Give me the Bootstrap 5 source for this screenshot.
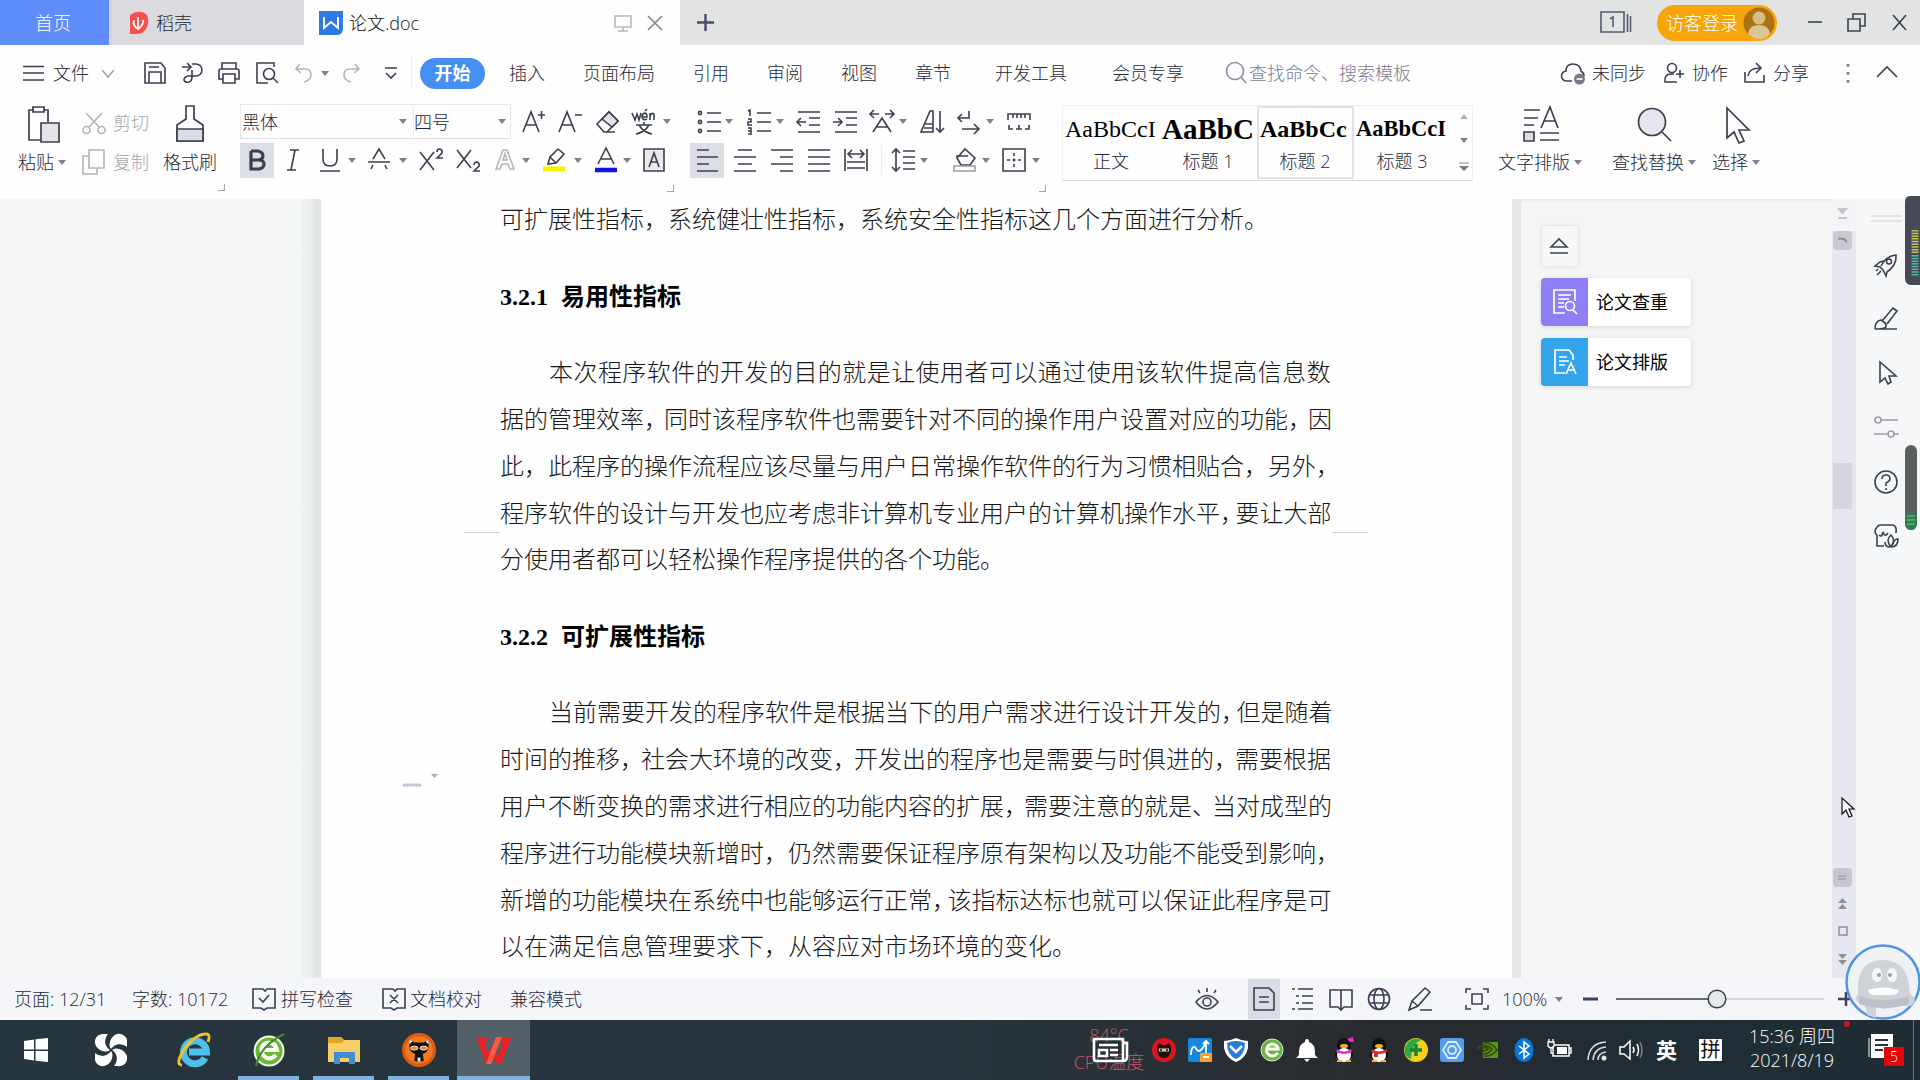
<!DOCTYPE html>
<html lang="zh-CN">
<head>
<meta charset="utf-8">
<title>论文.doc</title>
<link rel="stylesheet" href="https://cdn.jsdelivr.net/npm/bootstrap@5.3.0/dist/css/bootstrap.min.css">
<style>
body{width:1920px;height:1080px;overflow:hidden;font-family:"Open Sans","Noto Sans CJK SC",sans-serif;font-size:18px;line-height:24px;color:#25283a;background:#fefefe}
svg{display:block;overflow:visible;flex:none}
.ic{width:24px;height:24px;fill:none;stroke:#3b4050;stroke-width:1.6}
.big{width:40px;height:40px;fill:none;stroke:#3b4050;stroke-width:1.7}
.dim{stroke:#b3b5ba;color:#a9abb0}
.ca{width:0;height:0;border:4.5px solid transparent;border-top:5px solid #7d808a;border-bottom:0;display:block}
.track{display:grid;align-items:center;white-space:nowrap;justify-items:start}
body,.track{font-weight:300}
/* tab strip */
.tabs-bar{height:45px;background:#e2e4e4}
.home-tab{width:109px;background:#5f8dfb;color:#fff;padding-left:35px}
.dk-tab{width:195px;background:#dbdbdf;padding-left:18px;border-left:3px solid #d3d4db}
.doc-tab{width:376px;background:#fefefe;padding-left:15px;padding-right:13px}
.login{width:120px;border-radius:20px;background:#f7a50b;color:#fff;height:36px;padding:0 2px 0 9px}
/* menu */
.menu-bar{height:56px;padding-left:21px;grid-template-columns:32px 43px 47px 37px 37px 37px 38px 25px 22px 39px 33px 9px 89px 74px 110px 74px 74px 74px 80px 117px 112px 25px 312px 31px 70px 30px 50px 31px 63px 39px 40px}
.pill{width:65px;height:31px;border-radius:16px;background:#468ff2;color:#fff;font-weight:700;text-align:center;line-height:30px}
.vr-s{width:1px;height:30px;background:#ececf0}
/* ribbon */
.ribbon{height:98px}
.g-clip{width:240px;padding:3px 0 0 16px}
.g-font{width:450px;padding-top:3px}
.g-para{width:372px;padding-top:3px}
.lbl{margin-top:6px}
.f1{height:35px;grid-template-columns:270px 1fr}
.combo{width:271px;height:35px;border:1px solid #e9e9ec;border-bottom-color:#dfdfe3;grid-template-columns:158px 14px 1px 84px 12px}
.f1b{grid-template-columns:36px 37px 37px 31px 9px;padding-left:12px}
.f2{height:42px;grid-template-columns:41px 37px 30px 19px 32px 20px 37px 37px 29px 20px 32px 20px 29px 19px 34px}
.p1{height:35px;padding-left:7px;grid-template-columns:28px 22px 29px 20px 37px 37px 29px 21px 37px 29px 21px 34px}
.p2{height:42px;grid-template-columns:43px 37px 37px 37px 37px 10px 29px 33px 29px 20px 30px 10px}
.pressed{background:#dcdde5;width:34px;height:35px;display:grid;place-items:center}
.corner-mk{width:7px;height:7px;border:solid #a4a6ad;border-width:0 1.5px 1.5px 0}
.gallery{width:411px;height:76px;margin-top:4px;border:1px solid #f0f0f3;border-bottom:1px solid #d8d8dc}
.sty{width:97px;height:73px;padding:8px 3px 0 2px;overflow:hidden;text-align:center}
.sty b,.sty i{display:block;font-family:"Liberation Serif",serif;font-style:normal;color:#000;font-size:24px;line-height:30px;height:35px;white-space:nowrap;text-align:left}
.sty b{font-weight:700}
.sty.sel{border:2px solid #e2e2e6;padding:6px 2px 0 1px}
.sty span{display:block;line-height:24px}
.rb{padding-top:3px}
/* document area */
.work{height:779px;background:#f5f7f7;box-shadow:inset 0 4px 3px -2px #e8eaea}
.lgut{width:321px;background:linear-gradient(90deg,#f6f8f8 300px,#f1f4f4 301px,#e9ecec 312px,#e4e6e6 314px)}
.paper{width:1191px;background:#fefefe;padding:0 180px 0 179px;font-family:"Liberation Serif","Noto Sans CJK SC",serif;font-size:24px;color:#181818;font-weight:300;position:relative}
.ln{height:47px;line-height:47px;white-space:nowrap}
.ln.ind{padding-left:49px}
.ln.loose{letter-spacing:.44px}
.ln u{text-decoration:none;letter-spacing:-4px}
.ln.one u{letter-spacing:-8.5px}
.ln.three u{letter-spacing:-3px}
.hd{height:47px;line-height:47px;font-weight:700;font-size:24px;color:#000;word-spacing:7px}
.crop-mk{position:absolute;top:333px;width:36px;height:1px;background:#cfd1d1}
.rpane{width:320px;border-left:9px solid #e6e8e8;padding:27px 0 0 20px}
.up-btn{width:36px;height:40px;background:#f8f8f8;box-shadow:0 0 4px #d4d6d6;display:grid;place-items:center;margin-left:1px}
.tool-card{width:150px;height:48px;background:#fff;border-radius:4px;box-shadow:0 1px 5px #d2d4d6;overflow:hidden;color:#000;font-weight:400}
.tool-card>div{width:47px;height:48px;display:grid;place-items:center;margin-right:8px}
.sbar{width:24px;background:#e7e7f1}
.side{width:64px;background:#f5f7f8;padding-left:18px}
.ov{position:absolute}
/* status bar */
.status{height:42px;background:#f5f6f9;padding-left:14px;grid-template-columns:118px 120px 29px 101px 28px 100px 685px 53px 43px 38px 38px 41px 57px 37px 53px 28px 33px 222px 20px}
/* taskbar */
.taskbar{height:60px;background:linear-gradient(90deg,#26363e 0,#27343b 50%,#292b2f 72%,#1f2d34 88%,#1e2c33);color:#fff}
.app{height:60px;display:grid;place-items:center;border-bottom:0 solid #7fb2e4}
.app.on{border-bottom-width:4px;padding-top:4px}
.tray-row{grid-template-columns:36px 36px 36px 35px 37px 35px 37px 36px 37px 35px 36px 37px 34px 35px 45px 43px}
.tray-row svg{width:24px;height:24px}
.temp{color:#cf5568;font-size:18px;line-height:18px;left:1072px;top:1026px;width:74px;position:absolute}
</style>
<script src="https://cdn.jsdelivr.net/npm/bootstrap@5.3.0/dist/js/bootstrap.bundle.min.js"></script>
</head>
<body class="position-relative">
<!-- Tab strip -->
<header class="tabs-bar d-flex">
  <div class="home-tab d-flex align-items-center">首页</div>
  <div class="dk-tab d-flex align-items-center gap-2">
    <svg width="18" height="22" viewBox="0 0 18 22"><path d="M0 3Q9-3 16 2Q19 6 18 12Q16 22 6 22H0Z" fill="#f5504d"/><path d="M8 18V5M8 17Q2 13 4 8M8 17Q14 13 13 8" stroke="#fff" stroke-width="1.8" fill="none"/></svg>稻壳</div>
  <div class="doc-tab d-flex align-items-center">
    <svg width="24" height="24" viewBox="0 0 24 24"><path d="M0 0H24V17Q24 24 18 24H0Z" fill="#2f7be6"/><path d="M5 6V17L12 11L19 17V6" stroke="#fff" stroke-width="1.9" fill="none"/></svg>
    <span style="color:#111;padding-left:6px">论文.doc</span>
    <svg class="ic ms-auto" style="stroke:#b6b8c2" viewBox="0 0 24 24"><path d="M4 5H20V16H4ZM12 16V20M7 20H17"/></svg>
    <svg class="ic ms-2" style="stroke:#83858f" viewBox="0 0 24 24"><path d="M5 5L19 19M19 5L5 19"/></svg>
  </div>
  <svg class="ms-3 mt-2" width="20" height="28" viewBox="0 0 20 28"><path d="M9.500 6V23M1 14.500H18" stroke="#474a68" stroke-width="2.400"/></svg>
  <div class="d-flex align-items-center ms-auto pe-2">
    <svg width="32" height="24" viewBox="0 0 32 24" fill="none" stroke="#555970" stroke-width="1.6"><path d="M0 1H23V21H0ZM26.500 3V21M29.500 5V21"/><path d="M9 8L12 6V16" /></svg>
    <div class="login d-flex align-items-center justify-content-between ms-4"><span>访客登录</span>
      <svg width="32" height="32" viewBox="0 0 32 32"><circle cx="16" cy="16" r="15.500" fill="#a97316"/><circle cx="16" cy="11" r="6.500" fill="#d9bd82"/><path d="M5 27Q6 18 16 18Q26 18 27 27Q22 32 16 32Q10 32 5 27Z" fill="#dcc696"/></svg></div>
    <svg class="ic" style="margin-left:27px" viewBox="0 0 24 24"><path d="M4 11H18"/></svg>
    <svg class="ic" style="margin-left:18px" viewBox="0 0 24 24"><path d="M2 8H14V20H2ZM7 8V3H19V15H14"/></svg>
    <svg class="ic" style="margin-left:18px" viewBox="0 0 24 24"><path d="M5 4L18 19M18 4L5 19"/></svg>
  </div>
</header>

<!-- Menu bar -->
<nav class="menu-bar track">
  <svg class="ic" viewBox="0 0 24 24"><path d="M2 5.500H23M2 12H23M2 19H23"/></svg>
  <span>文件</span>
  <svg class="ic" style="stroke:#9da0aa" viewBox="0 0 24 24"><path d="M6 9L12 16L18 9"/></svg>
  <svg class="ic" viewBox="0 0 24 24"><path d="M2 2H18L22 7V22H2ZM6 22V11H18V22M6 6H16"/></svg>
  <svg class="ic" viewBox="0 0 24 24"><path d="M2 6H10M7 2L11 6L7 10M12 3H16A6 6 0 0 1 16 15H8Q4 16 4 19Q5 22 9 21Q12 20 12 16V9"/></svg>
  <svg class="ic" viewBox="0 0 24 24"><path d="M5 8V2H19V8M6 18H2V10Q2 8 4 8H20Q22 8 22 10V18H18M6 13H18V22H6Z"/></svg>
  <svg class="ic" viewBox="0 0 24 24"><path d="M20 6V2H3V22H14"/><circle cx="15" cy="13" r="5.500"/><path d="M19 17L24 22"/></svg>
  <svg class="ic dim" viewBox="0 0 24 24"><path d="M8 3L4 8L9 12M4 8H13Q19 8 19 14Q19 19 12 21"/></svg>
  <i class="ca ms-1"></i>
  <svg class="ic dim" viewBox="0 0 24 24"><path d="M16 3L20 8L15 12M20 8H11Q5 8 5 14Q5 19 12 21"/></svg>
  <svg class="ic" viewBox="0 0 24 24"><path d="M7 7H19M8 12L13 17L18 12"/></svg>
  <span class="vr-s"></span>
  <span class="pill">开始</span>
  <span>插入</span><span>页面布局</span><span>引用</span><span>审阅</span><span>视图</span><span>章节</span><span>开发工具</span><span>会员专享</span>
  <svg class="ic" style="stroke:#8b8fa3" viewBox="0 0 24 24"><circle cx="11" cy="10" r="8.500"/><path d="M17 16L22 22"/></svg>
  <span style="color:#787c94">查找命令、搜索模板</span>
  <svg class="ic" viewBox="0 0 24 24"><path d="M11 20H6A5 5 0 0 1 5 10Q5 3 12 3Q19 3 20 10Q23 12 23 15"/><circle cx="18.500" cy="18" r="5.500" fill="#777b87" stroke="none"/><path d="M15.500 18H21.500" stroke="#fff"/></svg>
  <span>未同步</span>
  <svg class="ic" viewBox="0 0 24 24"><circle cx="10" cy="7" r="4.500"/><path d="M15 21H3Q2 13 9 13H12M18 9V17M14 13H22"/></svg>
  <span>协作</span>
  <svg class="ic" viewBox="0 0 24 24"><path d="M3 11V21H22V14M6 15Q7 7 18 7M14 2L19 7L14 12"/></svg>
  <span>分享</span>
  <svg class="ic" viewBox="0 0 24 24"><path d="M12 3V5.500M12 11V13.500M12 19V21.500" stroke-width="2.500" stroke="#70737e"/></svg>
  <svg class="ic" viewBox="0 0 24 24"><path d="M2 16L12 6L22 16"/></svg>
</nav>

<!-- Ribbon -->
<section class="ribbon d-flex">
  <div class="g-clip d-flex">
    <div style="width:66px">
      <svg class="big" style="margin-left:7px" viewBox="0 0 40 40"><path d="M10 6H6V36H18M25 18V6H21M10 3H21V8H10Z"/><path d="M18 19H36V38H18Z" fill="#e3e4ea"/></svg>
      <div class="d-flex align-items-center gap-1 lbl" style="margin-left:2px">粘贴<i class="ca"></i></div>
    </div>
    <div style="width:72px;color:#a6a8ad">
      <div class="d-flex align-items-center" style="height:38px;gap:7px"><svg class="ic dim" viewBox="0 0 24 24"><path d="M4 2L17 16M20 2L7 16"/><circle cx="4.500" cy="19" r="3.500"/><circle cx="19.500" cy="19" r="3.500"/></svg>剪切</div>
      <div class="d-flex align-items-center" style="height:40px;gap:7px"><svg class="ic dim" viewBox="0 0 24 24"><path d="M7 0H22V18H7ZM7 6H1V24H15V18"/></svg>复制</div>
    </div>
    <div class="text-center" style="width:64px;padding-left:8px">
      <svg class="big mx-auto" viewBox="0 0 40 40"><path d="M16 2H24V15L33 21V37H7V21L16 15Z"/><path d="M7 25H33V37H7Z" fill="#dcdde4"/></svg>
      <div class="lbl text-nowrap">格式刷</div>
    </div>
    <i class="corner-mk align-self-end mb-2"></i>
  </div>
  <div class="g-font">
    <div class="f1 track">
      <div class="combo track"><span style="padding-left:1px">黑体</span><i class="ca"></i><span class="vr-s"></span><span>四号</span><i class="ca"></i></div>
      <div class="f1b track">
        <svg class="ic" viewBox="0 0 24 24"><path d="M1 22L9 2L17 22M4 15H14M16 5H23M19.500 1V9"/></svg>
        <svg class="ic" viewBox="0 0 24 24"><path d="M1 22L9 2L17 22M4 15H14M17 5H24"/></svg>
        <svg class="ic" viewBox="0 0 24 24"><path d="M2 14L14 2L23 11L12 22H9ZM12 22H20"/><path d="M7 9L14 2L23 11L17 17Z" fill="#e3e4ea"/></svg>
        <svg class="ic" viewBox="0 0 24 24"><path d="M0 3L3 10L5 4L7 10L9 3M10 7H15Q15 3 12.500 3Q10 4 10 7Q11 11 15 9M13 1L15-1M18 10V3M18 6Q20 2 22 4V10M4 15H20M12 12V15M7 15Q11 22 20 24M17 15Q13 22 4 24"/></svg>
        <i class="ca"></i>
      </div>
    </div>
    <div class="f2 track">
      <span class="pressed"><svg class="ic" viewBox="0 0 24 24" style="stroke-width:3.200"><path d="M6 3H13Q18 4 18 8Q18 12 12 12H6V3V21H14Q19 20 19 16Q19 12 13 12"/></svg></span>
      <svg class="ic" viewBox="0 0 24 24"><path d="M9 2H18M6 22H15M14 2L10 22"/></svg>
      <svg class="ic" viewBox="0 0 24 24"><path d="M5 1V11Q5 18 12 18Q19 18 19 11V1M2 23H22"/></svg><i class="ca"></i>
      <svg class="ic" viewBox="0 0 24 24"><path d="M6 11L12 1L18 11M1 14H23M4 21L6 17M20 21L18 17"/></svg><i class="ca"></i>
      <svg class="ic" viewBox="0 0 24 24"><path d="M1 4L15 22M15 4L1 22M18 4Q18 1 21 1Q24 2 23 5L18 10H24"/></svg>
      <svg class="ic" viewBox="0 0 24 24"><path d="M1 2L15 20M15 2L1 20M18 17Q18 14 21 14Q24 15 23 18L18 23H24"/></svg>
      <svg class="ic dim" viewBox="0 0 24 24"><path d="M3 21L10 2H14L21 21H17L15 16H9L7 21ZM10 12H14L12 6Z"/></svg><i class="ca"></i>
      <svg class="ic" viewBox="0 0 24 24"><path d="M6 16L8 9L16 1L22 6L14 15ZM8 9L14 15"/><path d="M1 21H23" stroke="#f6f200" stroke-width="5"/></svg><i class="ca"></i>
      <svg class="ic" viewBox="0 0 24 24"><path d="M4 16L12 0L20 16M7 11H17"/><path d="M1 22H23" stroke="#1111e6" stroke-width="4.500"/></svg><i class="ca"></i>
      <svg class="ic" viewBox="0 0 24 24"><path d="M2 1H22V23H2Z" fill="#e9eaee"/><path d="M7 19L12 5L17 19M9 14H15"/></svg>
    </div>
    <i class="corner-mk d-block ms-auto" style="margin-right:16px;margin-top:4px"></i>
  </div>
  <div class="g-para">
    <div class="p1 track">
      <svg class="ic" viewBox="0 0 24 24"><path d="M10 3H24M10 12H24M10 21H24"/><circle cx="3" cy="3" r="1.600"/><circle cx="3" cy="12" r="1.600"/><circle cx="3" cy="21" r="1.600"/></svg><i class="ca"></i>
      <svg class="ic" viewBox="0 0 24 24"><path d="M10 3H24M10 12H24M10 21H24M1 1L3 0V6M1 9H4V12H1V15H5M1 18H4V24H1M1 21H4"/></svg><i class="ca"></i>
      <svg class="ic" viewBox="0 0 24 24"><path d="M2 2H24M13 8H24M13 15H24M2 22H24M10 12H1M5 8L1 12L5 16"/></svg>
      <svg class="ic" viewBox="0 0 24 24"><path d="M2 2H24M13 8H24M13 15H24M2 22H24M0 12H9M5 8L9 12L5 16"/></svg>
      <svg class="ic" viewBox="0 0 24 24"><path d="M3 22L12 8L21 22M6 17H18M0 4H9M4 0L0 4L4 8M15 4H24M20 0L24 4L20 8"/></svg><i class="ca"></i>
      <svg class="ic" viewBox="0 0 24 24"><path d="M1 22L10 1H13V22ZM5 14H13M4 18H13M20 1V22M16 18L20 22L24 18"/></svg>
      <svg class="ic" viewBox="0 0 24 24"><path d="M12 1V8H1M5 4L1 8L5 12M5 19H22M17 14L22 19L17 24"/></svg><i class="ca"></i>
      <svg class="ic" viewBox="0 0 24 24"><path d="M1 10V4H23V10M6 4V8M10 4V8M14 4V8M18 4V8M2 15V19H6M9 19H15M12 15V19M18 19H22V15"/></svg>
    </div>
    <div class="p2 track">
      <span class="pressed"><svg class="ic" viewBox="0 0 24 24"><path d="M2 2H14M2 9H23M2 16H14M2 23H23"/></svg></span>
      <svg class="ic" viewBox="0 0 24 24"><path d="M5 2H19M1 9H23M5 16H19M1 23H23"/></svg>
      <svg class="ic" viewBox="0 0 24 24"><path d="M1 2H23M10 9H23M1 16H23M10 23H23"/></svg>
      <svg class="ic" viewBox="0 0 24 24"><path d="M1 2H23M1 9H23M1 16H23M1 23H23"/></svg>
      <svg class="ic" viewBox="0 0 24 24"><path d="M1 1V23M23 1V23M4 6H20M8 2L4 6L8 10M16 2L20 6L16 10M3 14H21M3 20H21"/></svg>
      <span class="vr-s"></span>
      <svg class="ic" viewBox="0 0 24 24"><path d="M5 1V23M1 5L5 1L9 5M1 19L5 23L9 19M12 3H24M12 9H24M12 15H24M12 21H24"/></svg><i class="ca"></i>
      <svg class="ic" viewBox="0 0 24 24"><path d="M4 10L12 1L22 10L17 17H8ZM3 8H15"/><path d="M1 18H22V23H1Z" stroke="#999ca5"/></svg><i class="ca"></i>
      <svg class="ic" viewBox="0 0 24 24"><path d="M1 1H23V23H1Z"/><path d="M12 5V19M5 12H19" stroke-dasharray="3 2.500"/></svg><i class="ca"></i>
    </div>
    <i class="corner-mk d-block ms-auto" style="margin-right:16px;margin-top:4px"></i>
  </div>
  <div class="gallery d-flex">
    <div class="sty"><i>AaBbCcI</i><span>正文</span></div>
    <div class="sty"><b style="font-size:29px">AaBbC</b><span>标题 1</span></div>
    <div class="sty sel"><b>AaBbCc</b><span>标题 2</span></div>
    <div class="sty"><b style="font-size:22.5px">AaBbCcI</b><span>标题 3</span></div>
    <div class="d-flex flex-column align-items-center justify-content-between py-2 ps-2">
      <i class="ca" style="transform:rotate(180deg);opacity:.6"></i><i class="ca"></i>
      <svg width="10" height="10" viewBox="0 0 10 10"><path d="M0 1H10" stroke="#888"/><path d="M0 4H10L5 9Z" fill="#777a84"/></svg></div>
  </div>
  <div class="rb text-nowrap" style="padding-left:25px">
    <svg class="big" style="margin-left:24px" viewBox="0 0 40 40"><path d="M2 6H18M2 14H16M2 21H12M18 36H37M18 29H37"/><path d="M2 28H12V37H2Z" fill="#dddee4"/><path d="M19 24L28 3L36 24M22 17H33"/></svg>
    <div class="d-flex align-items-center lbl gap-1">文字排版<i class="ca"></i></div>
  </div>
  <div class="rb text-nowrap" style="padding-left:30px">
    <svg class="big" style="margin-left:22px" viewBox="0 0 40 40"><circle cx="18" cy="18" r="13.500" fill="#e6e7ee"/><path d="M28 28L37 37"/></svg>
    <div class="d-flex align-items-center lbl gap-1">查找替换<i class="ca"></i></div>
  </div>
  <div class="rb text-nowrap" style="padding-left:16px">
    <svg class="big" style="margin-left:5px" viewBox="0 0 40 40"><path d="M10 4V34L17 28L22 39L27 37L22 26H32Z"/></svg>
    <div class="d-flex align-items-center lbl gap-1">选择<i class="ca"></i></div>
  </div>
</section>

<!-- Document area -->
<main class="work d-flex">
  <div class="lgut"></div>
  <article class="paper">
    <div class="ln" style="margin-top:-2px">可扩展性指标，系统健壮性指标，系统安全性指标这几个方面进行分析。</div>
    <h3 class="hd m-0" style="padding-top:6px;height:106px;line-height:94px">3.2.1 易用性指标</h3>
    <div class="ln ind loose">本次程序软件的开发的目的就是让使用者可以通过使用该软件提高信息数</div>
    <div class="ln">据的管理效率<u>，</u>同时该程序软件也需要针对不同的操作用户设置对应的功能<u>，</u>因</div>
    <div class="ln">此，此程序的操作流程应该尽量与用户日常操作软件的行为习惯相贴合，另外，</div>
    <div class="ln one">程序软件的设计与开发也应考虑非计算机专业用户的计算机操作水平<u>，</u>要让大部</div>
    <div class="ln" style="margin-top:-1px">分使用者都可以轻松操作程序提供的各个功能。</div>
    <h3 class="hd m-0" style="padding-top:6px;height:106px;line-height:94px">3.2.2 可扩展性指标</h3>
    <div class="ln ind one">当前需要开发的程序软件是根据当下的用户需求进行设计开发的<u>，</u>但是随着</div>
    <div class="ln three">时间的推移<u>，</u>社会大环境的改变<u>，</u>开发出的程序也是需要与时俱进的<u>，</u>需要根据</div>
    <div class="ln">用户不断变换的需求进行相应的功能内容的扩展<u>，</u>需要注意的就是<u>、</u>当对成型的</div>
    <div class="ln">程序进行功能模块新增时，仍然需要保证程序原有架构以及功能不能受到影响，</div>
    <div class="ln one">新增的功能模块在系统中也能够运行正常<u>，</u>该指标达标也就可以保证此程序是可</div>
    <div class="ln" style="margin-top:-1px">以在满足信息管理要求下，从容应对市场环境的变化。</div>
    <i class="crop-mk" style="left:143px"></i><i class="crop-mk" style="left:1011px"></i>
    <svg class="ov" style="left:82px;top:572px" width="40" height="18" viewBox="0 0 40 18"><path d="M0 14H18" stroke="#c6c7d8" stroke-width="3"/><path d="M28 3H35L31.500 7Z" fill="#aaacb4"/></svg>
  </article>
  <aside class="rpane">
    <div class="up-btn"><svg class="ic" viewBox="0 0 24 24"><path d="M3 13L11 5L19 13ZM2 19H20"/></svg></div>
    <div class="tool-card d-flex align-items-center" style="margin-top:12px"><div style="background:#8d80f6"><svg width="26" height="26" viewBox="0 0 26 26" fill="none" stroke="#fff" stroke-width="1.700"><path d="M23 12V1H2V24H13M6 6H19M6 10H17M6 14H12M6 18H12"/><circle cx="18" cy="17" r="4.500"/><path d="M21 21L25 25"/></svg></div>论文查重</div>
    <div class="tool-card d-flex align-items-center" style="margin-top:12px"><div style="background:#34a5ea"><svg width="26" height="26" viewBox="0 0 26 26" fill="none" stroke="#fff" stroke-width="1.700"><path d="M21 11V6L17 1H3V24H13M7 8H15M7 12H17M7 16H13M14 25L19 14L24 25M16 21H22"/></svg></div>论文排版</div>
  </aside>
  <div class="sbar position-relative">
    <svg width="24" height="779" viewBox="0 0 24 779"><path d="M0 0H24V32H0Z" fill="#f4f5f9"/><path d="M7 10H14L10.500 14ZM6 19H15" fill="#c3c4cc" stroke="#c3c4cc" stroke-width="2"/><rect x="1" y="32" width="19" height="19" rx="4" fill="#c9c9d1"/><path d="M6 40Q11 38 15 43" stroke="#8b8c93" stroke-width="2" fill="none"/><rect x="1" y="264" width="19" height="46" fill="#d5d5df"/><rect x="1" y="669" width="19" height="19" rx="4" fill="#c6c6cd"/><path d="M6 677H14M6 680H14" stroke="#92939a"/><path d="M6 704L10.500 699L15 704ZM6 710L10.500 705L15 710ZM6 755L10.500 760L15 755ZM6 761L10.500 766L15 761Z" fill="#8d8f99"/><rect x="7" y="728" width="8" height="8" fill="none" stroke="#8d8f99" stroke-width="1.500"/></svg>
  </div>
  <div class="side">
    <svg width="26" height="7" class="mt-3" viewBox="0 0 26 7"><path d="M-3 1H28M-3 6H28" stroke="#cdd0d0"/></svg>
    <svg class="ic" style="margin-top:31px" viewBox="0 0 24 24"><path d="M7 13Q12 3 22 2Q23 12 13 19L12 23L9 17L6 14L1 13L6 9L10 8M2 18L4 16M3 22L7 18"/><circle cx="15" cy="8.500" r="2.500"/></svg>
    <svg class="ic" style="margin-top:30px" viewBox="0 0 24 24"><path d="M8 14L19 1L23 4L13 17M1 22Q1 14 7 13Q13 16 12 20Q10 22 1 22H23"/></svg>
    <svg class="ic" style="margin-top:30px" viewBox="0 0 24 24"><path d="M6 1V21L11 17L14 23L17 21L15 15H22Z"/></svg>
    <svg class="ic" style="margin-top:30px;stroke:#9a9da5" viewBox="0 0 24 24"><path d="M7 5H24M0 19H13M20 19H25"/><circle cx="4" cy="5" r="3"/><circle cx="17" cy="19" r="3"/></svg>
    <svg class="ic" style="margin-top:31px" viewBox="0 0 24 24"><circle cx="12" cy="12" r="11"/><path d="M8 9Q8 5 12 5Q16 5 16 9Q16 11 12 13V16M12 18V20"/></svg>
    <svg class="ic" style="margin-top:30px" viewBox="0 0 24 24"><path d="M3 11V22H10M3 11Q-1 8 3 3Q4 1 7 1H19Q23 2 22 9M5 11Q8 14 9 8Q11 14 14 9M17 23Q11 16 17 11Q22 16 17 23ZM16 23Q11 23 11 18M17 23Q24 23 24 15Q20 15 19 20"/></svg>
  </div>
</main>

<!-- Status bar -->
<footer class="status track">
  <span>页面: 12/31</span><span>字数: 10172</span>
  <svg class="ic" viewBox="0 0 24 24"><path d="M11 2L13 4L15 2H23V21H15L12 23L9 21H1V2ZM7 11L11 15L17 8"/></svg><span>拼写检查</span>
  <svg class="ic" viewBox="0 0 24 24"><path d="M11 2L13 4L15 2H23V21H15L12 23L9 21H1V2ZM8 8L16 16M16 8L8 16"/></svg><span>文档校对</span>
  <span>兼容模式</span>
  <svg class="ic" viewBox="0 0 24 24"><path d="M1 15Q12 2 23 15Q12 29 1 15ZM12 5V1M5 6L3 3M19 6L21 3"/><circle cx="12" cy="15" r="4"/></svg>
  <span style="width:32px;height:40px;background:#dadce5;display:grid;place-items:center"><svg class="ic" viewBox="0 0 24 24"><path d="M2 1H17L22 6V23H2ZM7 10H17M7 15H17"/></svg></span>
  <svg class="ic" viewBox="0 0 24 24"><path d="M1 2H4M7 2H22M5 9H8M11 9H22M5 16H8M11 16H22M1 22H4M7 22H22"/></svg>
  <svg class="ic" viewBox="0 0 24 24"><path d="M12 3H1V20H9L12 23L15 20H23V3H15ZM12 3V22"/></svg>
  <svg class="ic" viewBox="0 0 24 24"><circle cx="12" cy="12" r="10.500"/><ellipse cx="12" cy="12" rx="5" ry="10.500"/><path d="M2 8H22M2 16H22"/></svg>
  <svg class="ic" viewBox="0 0 24 24"><path d="M1 23L4 14L17 1L22 5L10 19ZM4 14L10 19M12 23H24"/></svg>
  <svg class="ic" viewBox="0 0 24 24"><path d="M1 6V2H6M18 2H23V6M1 18V22H6M18 22H23V18M7 7H17V17H7Z"/></svg>
  <span>100%</span><i class="ca"></i>
  <svg width="16" height="20" viewBox="0 0 16 20"><path d="M0 10H15" stroke="#3e4258" stroke-width="3"/></svg>
  <svg width="208" height="22" viewBox="0 0 208 22"><path d="M0 11H100" stroke="#3a3e4c" stroke-width="1.300"/><path d="M100 11H208" stroke="#cfd1d6" stroke-width="1.300"/><circle cx="101" cy="11" r="8.800" fill="#e7e8ea" stroke="#3a3e4c" stroke-width="1.500"/></svg>
  <svg width="16" height="20" viewBox="0 0 16 20"><path d="M0 10H14M8 3V17" stroke="#3e4258" stroke-width="2.500"/></svg>
</footer>

<!-- Windows taskbar -->
<div class="taskbar d-flex position-relative">
  <div class="app" style="width:72px"><svg width="24" height="24" viewBox="0 0 24 24" fill="#fff"><path d="M0 3L10 1.500V11.500H0ZM11.500 1.200L24 0V11.500H11.500ZM0 13H10V22.500L0 21ZM11.500 13H24V24L11.500 22.800Z"/></svg></div>
  <div class="app" style="width:78px"><svg width="34" height="34" viewBox="0 0 34 34" fill="#fff"><path d="M16.500 17Q12 20 6 17Q0 13 1 7Q3 0 11 1H14Q9 9 16.500 17Z"/><path d="M16.500 17Q12 20 6 17Q0 13 1 7Q3 0 11 1H14Q9 9 16.500 17Z" transform="rotate(90 17 17)"/><path d="M16.500 17Q12 20 6 17Q0 13 1 7Q3 0 11 1H14Q9 9 16.500 17Z" transform="rotate(180 17 17)"/><path d="M16.500 17Q12 20 6 17Q0 13 1 7Q3 0 11 1H14Q9 9 16.500 17Z" transform="rotate(270 17 17)"/><path d="M15 1Q8 10 17 17Q26 24 19 33M1 19Q10 26 17 17Q24 8 33 15" fill="none" stroke="#27363e" stroke-width="1.600"/></svg></div>
  <div class="app" style="width:88px"><svg width="34" height="34" viewBox="0 0 34 34" fill="none"><path d="M28 25A11.500 11.500 0 1 1 29.500 19H12" stroke="#4fc0ec" stroke-width="7"/><path d="M5 32Q-2 32 6 18Q18 1 29 1Q34 1 31 9" stroke="#f5c124" stroke-width="2.800"/></svg></div>
  <div class="app on" style="width:61px"><svg width="34" height="34" viewBox="0 0 34 34" fill="none"><circle cx="17" cy="18" r="14.500" fill="#68b92f" stroke="#f4faef" stroke-width="2"/><path d="M24 22Q17 29 11 22Q7 14 14 10Q23 8 25 17H11" stroke="#fff" stroke-width="4"/><path d="M4 33Q8 13 32 1" stroke="#438b27" stroke-width="2"/></svg></div>
  <div class="app on" style="width:61px;margin-left:14px"><svg width="34" height="30" viewBox="0 0 34 30"><path d="M1 2H14L17 5H33V27H1Z" fill="#f6ce68"/><path d="M1 2H14L17 5L15 8H1Z" fill="#e0a52b"/><path d="M7 29V17H28V29H22V23H13V29Z" fill="#3f8dd5"/></svg></div>
  <div class="app on" style="width:61px;margin-left:14px"><svg width="36" height="36" viewBox="0 0 38 38"><circle cx="19" cy="19" r="18" fill="#df5a14"/><circle cx="19" cy="19" r="14.500" fill="#f07a20"/><path d="M9 17V8L14 11H24L29 8V17Q27 23 23 23L24 31H14L15 23Q10 22 9 17Z" fill="#111"/><path d="M9 8L12 10L9 13ZM29 8L26 10L29 13Z" fill="#fff"/><ellipse cx="14" cy="17" rx="4" ry="2" fill="#f47a1a" stroke="#fff"/><ellipse cx="24" cy="17" rx="4" ry="2" fill="#f47a1a" stroke="#fff"/><path d="M17.500 27H20.500V31H17.500Z" fill="#eee"/></svg></div>
  <div class="app on" style="width:73px;margin-left:8px;background:#526068"><svg width="36" height="28" viewBox="0 0 36 28"><path d="M0 1H13L11 5H8L13 17L17 8H22L19 14L22 20L27 5H24L26 1H36L25 28H20L17 19L14 28H10Z" fill="#e9222a"/><path d="M20 1H26L15 28H10Z" fill="#fb5b40"/></svg></div>

  <div class="track tray-row" style="margin-left:622px">
    <svg viewBox="0 0 24 24"><circle cx="12" cy="12" r="12" fill="#e11320"/><path d="M5 9L7 5L10 7H14L17 5L19 9V14Q17 20 12 20Q7 20 5 14Z" fill="#171515"/><path d="M7 12H17" stroke="#f4c3a1" stroke-width="3"/><path d="M8 12H10M14 12H16" stroke="#111" stroke-width="1.500"/></svg>
    <svg viewBox="0 0 24 24"><rect width="24" height="24" rx="2" fill="#1687df"/><path d="M3 17Q3 8 7 9Q10 15 13 12Q15 10 18 5M18 15V3M15 6L18 3L21 6" stroke="#fff" stroke-width="1.800" fill="none"/><path d="M12 15H24V24H12Z" fill="#f5a226"/><path d="M15 19H21" stroke="#fff" stroke-width="2"/></svg>
    <svg viewBox="0 0 24 24"><path d="M12 0Q18 3 24 3V10Q22 20 12 24Q2 20 0 10V3Q6 3 12 0Z" fill="#fff"/><path d="M3 5Q12 1 21 5Q21 17 12 21Q3 17 3 5Z" fill="#287bd8"/><path d="M6 8L12 14L18 8" stroke="#fff" stroke-width="2.500" fill="none"/></svg>
    <svg viewBox="0 0 24 24"><circle cx="12" cy="12" r="11" fill="#66b73c" stroke="#ddebd4"/><path d="M18 15Q12 21 7 15Q5 8 12 6Q18 7 18 11H8" stroke="#fff" stroke-width="3" fill="none"/></svg>
    <svg viewBox="0 0 24 24"><path d="M12 1Q14 1 14 4Q20 6 20 14V17L23 20H1L4 17V14Q4 6 10 4Q10 1 12 1ZM9 21H15L12 24Z" fill="#fff"/></svg>
    <svg viewBox="0 0 24 24"><path d="M4 20Q1 17 5 12V7Q6 0 12 0Q18 0 19 8V12Q23 17 20 20Z" fill="#171217"/><ellipse cx="12" cy="17" rx="7" ry="7" fill="#fff"/><path d="M5 11Q12 16 19 11L20 14Q12 18 4 14ZM15 1L21-1L22 4L18 4Z" fill="#e431bf"/><ellipse cx="12" cy="8" rx="4" ry="2" fill="#f5b225"/><path d="M5 23H10M14 23H19" stroke="#f5b225" stroke-width="2"/></svg>
    <svg viewBox="0 0 24 24"><path d="M4 20Q1 17 5 12V7Q6 0 12 0Q18 0 19 8V12Q23 17 20 20Z" fill="#111"/><ellipse cx="12" cy="17" rx="7" ry="7" fill="#fff"/><path d="M5 11Q12 16 19 11L20 14Q12 18 4 14ZM7 14H11V19H7Z" fill="#dd2927"/><ellipse cx="12" cy="8" rx="4" ry="2" fill="#f5b225"/><path d="M5 23H10M14 23H19" stroke="#f5b225" stroke-width="2"/></svg>
    <svg viewBox="0 0 24 24"><circle cx="12" cy="12" r="12" fill="#f4cf1e"/><path d="M1 16A12 12 0 0 1 18 2Q8 4 7 21Q3 20 1 16Z" fill="#2daa48"/><path d="M12 6V18M6 12H18" stroke="#198339" stroke-width="3.500"/></svg>
    <svg viewBox="0 0 24 24"><rect width="24" height="24" rx="3" fill="#559ded"/><path d="M8 4H16L21 12L16 20H8L3 12Z" fill="none" stroke="#dcebfd" stroke-width="1.800"/><circle cx="12" cy="12" r="4" fill="none" stroke="#dcebfd" stroke-width="1.800"/></svg>
    <svg viewBox="0 0 24 24"><path d="M6 4H21V20H6Z" fill="#5c9612"/><path d="M0 11Q7 4 15 11Q10 18 5 15M4 11Q8 8 11 11Q8 14 6 12M7 5Q15 4 20 12Q15 19 7 18" fill="none" stroke="#314d11" stroke-width="1.800"/></svg>
    <svg viewBox="0 0 24 24"><ellipse cx="12" cy="12" rx="9.500" ry="12" fill="#0877dc"/><path d="M7 8L17 16L12 20V4L17 8L7 16" fill="none" stroke="#fff" stroke-width="1.600"/></svg>
    <svg viewBox="0 0 24 24"><path d="M5 7H21V18H5ZM21 10H23V15H21" fill="none" stroke="#fff" stroke-width="1.500"/><path d="M9 9H19V16H9Z" fill="#fff"/><path d="M0 4H6V8Q3 12 0 8ZM1 4V1M5 4V1M3 10V15H5" fill="#27343a" stroke="#fff" stroke-width="1.300"/></svg>
    <svg viewBox="0 0 24 24" fill="none" stroke="#d9dfe1" stroke-width="1.500"><path d="M3 22Q4 5 21 4M8 22Q9 10 21 9M13 22Q13 15 21 14"/><circle cx="19" cy="20" r="1.800" fill="#fff"/></svg>
    <svg viewBox="0 0 24 24" fill="none" stroke="#fff" stroke-width="1.500"><path d="M1 9H5L11 3V21L5 16H1ZM14 9Q16 12 14 15M18 6Q21 12 18 18"/><path d="M21 4Q25 12 21 20" opacity=".4"/></svg>
    <span class="fw-bold" style="font-size:21px;margin-left:2px">英</span>
    <span class="text-center" style="background:#fff;color:#111;width:23px;height:22px;line-height:21px;font-size:20px;font-weight:400">拼</span>
  </div>
  <div class="d-flex flex-column justify-content-center align-items-center" style="margin-left:2px;width:96px;line-height:24px;white-space:nowrap;padding-bottom:4px"><span>15:36 周四</span><span>2021/8/19</span></div>
  <div class="d-flex align-items-center" style="margin-left:28px"><svg width="36" height="34" viewBox="0 0 36 34"><path d="M3 1H25V20L19 25H3Z" fill="#fff"/><path d="M7 7H20M7 12H20M7 17H15" stroke="#26343b" stroke-width="2"/><path d="M1 5V24" stroke="#fff"/><rect x="16" y="14" width="20" height="19" fill="#e3060b"/><text x="26" y="29" fill="#fff" font-size="14" text-anchor="middle">5</text></svg></div>
</div>

<!-- Desktop overlays -->
<div class="temp text-center">84°C<div style="margin-top:9px">CPU温度</div></div>
<svg class="ov" style="left:1092px;top:1037px" width="36" height="26" viewBox="0 0 36 26" fill="none" stroke="#fff" stroke-width="2.600"><path d="M2 2H31V24H4Q2 24 2 21ZM31 6H35V20Q35 24 31 24M7 8H26M7 13H15V19H7ZM18 13H26M18 18H26"/></svg>
<svg class="ov" style="left:1843px;top:1022px" width="8" height="6"><circle cx="4" cy="2" r="3" fill="#d8141a"/></svg>
<i class="ov" style="left:1913px;top:1020px;width:1px;height:60px;background:#69757b"></i>
<svg class="ov" style="left:1905px;top:196px" width="15" height="89" viewBox="0 0 15 89"><path d="M15 0H5Q0 0 0 6V82Q0 89 6 89H15Z" fill="#464957"/><path d="M10 34V58" stroke="#bec454" stroke-width="7" stroke-dasharray="1.500 1.200"/><path d="M10 59V80" stroke="#4fb89a" stroke-width="7" stroke-dasharray="1.500 1.200"/></svg>
<svg class="ov" style="left:1905px;top:445px" width="12" height="85" viewBox="0 0 12 85"><rect width="12" height="85" rx="6" fill="#5b605e"/><path d="M0 68H12V79Q11 85 6 85Q1 85 0 79Z" fill="#337b4d"/><path d="M2 71H10M2 75H10M2 79H10" stroke="#63d18b"/></svg>
<svg class="ov" style="left:1841px;top:797px" width="14" height="21" viewBox="0 0 14 21"><path d="M1 1V17L5 13L8 20L11 19L8 12H13Z" fill="#fff" stroke="#111" stroke-width="1.200"/></svg>
<svg class="ov" style="left:1845px;top:944px" width="76" height="76" viewBox="0 0 76 76"><circle cx="38" cy="38" r="36.500" fill="#eff1f5" stroke="#4c94e6" stroke-width="2.500"/><path d="M13 50Q11 16 38 16Q64 16 65 50Q74 55 66 62H48Q39 68 31 62V74L22 71L20 60Q6 58 13 50Z" fill="#cfd2d9"/><path d="M14 52Q38 60 64 52V60Q40 68 14 60Z" fill="#bcc0c9"/><ellipse cx="32" cy="31" rx="5" ry="7" fill="#f6f7f9"/><ellipse cx="47" cy="31" rx="5" ry="7" fill="#f6f7f9"/><circle cx="34" cy="31" r="2" fill="#9a9ea6"/><circle cx="45" cy="31" r="2" fill="#9a9ea6"/><path d="M23 46Q38 41 54 46Q53 51 47 51H29Q24 51 23 46Z" fill="#fff"/></svg>
</body>
</html>
